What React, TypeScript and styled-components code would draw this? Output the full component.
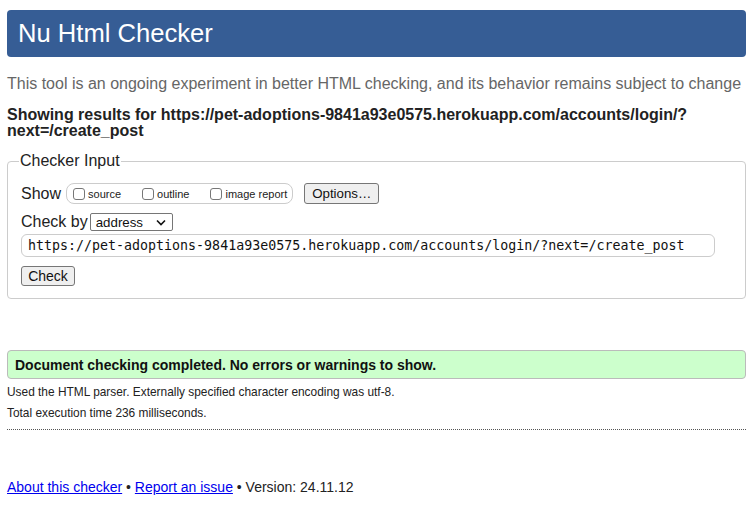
import React from "react";
import styled, { createGlobalStyle } from "styled-components";

const Global = createGlobalStyle`
  html, body { margin: 0; padding: 0; background: #fff; }
  body { font-family: "Liberation Sans", Arial, sans-serif; color: #222; }
`;

const Page = styled.div`
  padding: 10px 9px 0 7px;
  display: flex;
  flex-direction: column;
`;

const Header = styled.h1`
  margin: 0;
  height: 47px;
  background: #365d95;
  border-radius: 4px;
  color: #fff;
  font-weight: normal;
  font-size: 25.6px;
  line-height: 47px;
  padding-left: 11px;
`;

const Intro = styled.p`
  margin: 17px 0 0;
  font-size: 16px;
  line-height: 20px;
  color: #666;
  white-space: nowrap;
`;

const Results = styled.p`
  margin: 13px 0 0;
  font-size: 16px;
  line-height: 16px;
  font-weight: bold;
  color: #222;
  width: 712px;
`;

const Fieldset = styled.fieldset`
  margin: 13px 0 0;
  border: 1px solid #ccc;
  border-radius: 4px;
  padding: 0 13px 12px 13px;
  display: flex;
  flex-direction: column;
  align-items: flex-start;
`;

const Legend = styled.legend`
  font-size: 16px;
  line-height: 18px;
  padding: 0 1px;
  margin-left: -2px;
  color: #222;
`;

const Row = styled.div<{ $top: number }>`
  display: flex;
  align-items: center;
  margin-top: ${(p) => p.$top}px;
  font-size: 16px;
  color: #222;
`;

const Pill = styled.div`
  display: flex;
  align-items: center;
  height: 19px;
  border: 1px solid #ccc;
  border-radius: 8px;
  margin-left: 5px;
  padding: 0 5px 0 6px;
  gap: 21px;
`;

const Opt = styled.label`
  display: flex;
  align-items: center;
  gap: 3px;
  font-size: 11px;
  color: #222;
`;

const Box = styled.span`
  display: inline-block;
  width: 10px;
  height: 10px;
  border: 1px solid #777;
  border-radius: 3px;
  background: #fff;
`;

const Button = styled.button<{ $w: number; $h: number; $fs: number }>`
  width: ${(p) => p.$w}px;
  height: ${(p) => p.$h}px;
  font-family: "Liberation Sans", Arial, sans-serif;
  font-size: ${(p) => p.$fs}px;
  background: #efefef;
  border: 1px solid #767676;
  border-radius: 3px;
  color: #111;
  padding: 0;
`;

const OptionsButton = styled(Button)`
  margin-left: 11px;
`;

const Select = styled.div`
  display: flex;
  align-items: center;
  justify-content: space-between;
  width: 83px;
  height: 18px;
  margin-left: 2px;
  border: 1px solid #767676;
  border-radius: 2px;
  padding: 0 6px 0 5px;
  box-sizing: border-box;
  font-size: 13.3px;
  color: #111;
`;

const UrlInput = styled.div`
  margin-top: 3px;
  width: 694px;
  height: 23px;
  box-sizing: border-box;
  border: 1px solid #ccc;
  border-radius: 6px;
  padding-left: 6px;
  display: flex;
  align-items: center;
  font-family: "DejaVu Sans Mono", "Liberation Mono", monospace;
  font-size: 13.3px;
  color: #111;
  white-space: nowrap;
  overflow: hidden;
`;

const CheckButton = styled(Button)`
  margin-top: 9px;
`;

const Success = styled.div`
  margin-top: 51px;
  height: 29px;
  box-sizing: border-box;
  border: 1px solid #bbb;
  border-radius: 4px;
  background: #ccffcc;
  display: flex;
  align-items: center;
  padding-left: 7px;
  font-size: 14px;
  font-weight: bold;
  color: #111;
`;

const Small = styled.p<{ $top: number }>`
  margin: ${(p) => p.$top}px 0 0;
  font-size: 11.9px;
  line-height: 14px;
  color: #222;
`;

const Rule = styled.hr`
  margin: 9px 0 0;
  border: 0;
  border-top: 1px dotted #555;
  height: 0;
`;

const Footer = styled.p`
  margin: 49px 0 0;
  font-size: 14px;
  line-height: 16px;
  color: #222;
`;

const Link = styled.a`
  color: #0000ee;
  text-decoration: underline;
`;

export default function App() {
  return (
    <>
      <Global />
      <Page>
        <Header>Nu Html Checker</Header>
        <Intro>
          This tool is an ongoing experiment in better HTML checking, and its behavior remains subject to change
        </Intro>
        <Results>
          Showing results for https://pet-adoptions-9841a93e0575.herokuapp.com/accounts/login/?
          next=/create_post
        </Results>
        <Fieldset>
          <Legend>Checker Input</Legend>
          <Row $top={13}>
            Show
            <Pill>
              <Opt>
                <Box />
                source
              </Opt>
              <Opt>
                <Box />
                outline
              </Opt>
              <Opt>
                <Box />
                image report
              </Opt>
            </Pill>
            <OptionsButton $w={75} $h={21} $fs={13.3}>
              Options…
            </OptionsButton>
          </Row>
          <Row $top={9}>
            Check by
            <Select>
              address
              <svg width="10" height="7" viewBox="0 0 10 7">
                <path d="M1 1.5 L5 5.5 L9 1.5" fill="none" stroke="#111" strokeWidth="1.6" />
              </svg>
            </Select>
          </Row>
          <UrlInput>https://pet-adoptions-9841a93e0575.herokuapp.com/accounts/login/?next=/create_post</UrlInput>
          <CheckButton $w={54} $h={20} $fs={14}>
            Check
          </CheckButton>
        </Fieldset>
        <Success>Document checking completed. No errors or warnings to show.</Success>
        <Small $top={6}>Used the HTML parser. Externally specified character encoding was utf-8.</Small>
        <Small $top={7}>Total execution time 236 milliseconds.</Small>
        <Rule />
        <Footer>
          <Link href="#">About this checker</Link> • <Link href="#">Report an issue</Link> • Version: 24.11.12
        </Footer>
      </Page>
    </>
  );
}
